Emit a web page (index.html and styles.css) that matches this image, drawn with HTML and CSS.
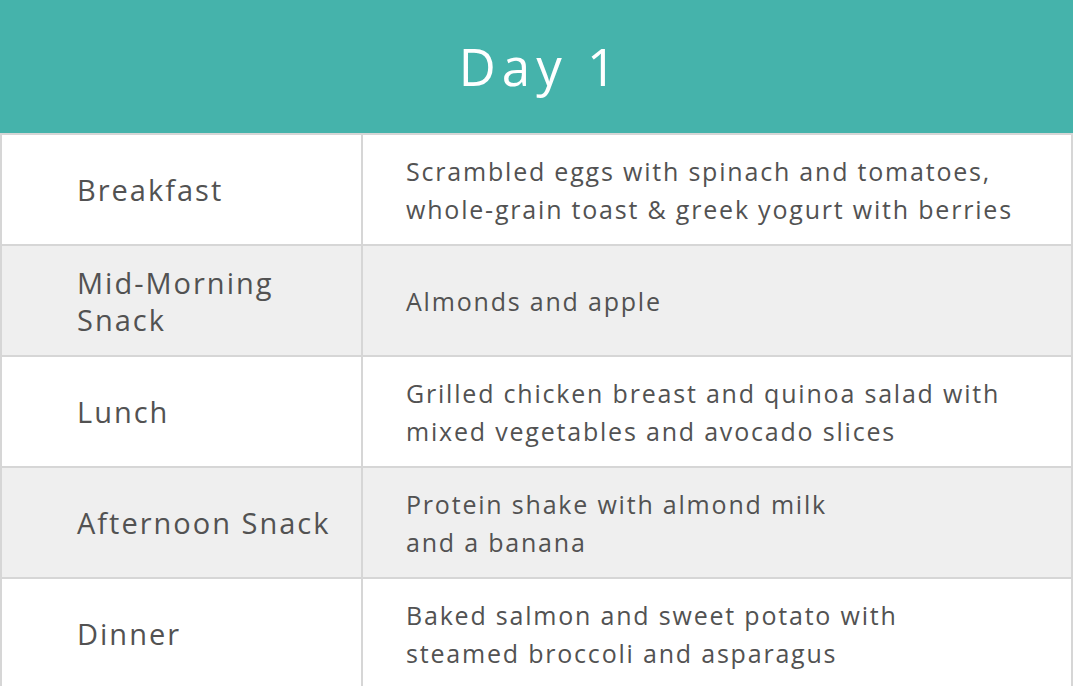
FILE: index.html
```html
<!DOCTYPE html>
<html>
<head>
<meta charset="utf-8">
<link rel="stylesheet" href="styles.css">
</head>
<body>
<div class="plan">
  <div class="header"><h1 class="title">Day 1</h1></div>
  <table class="meals">
    <tr class="row">
      <td class="meal">Breakfast</td>
      <td class="desc">Scrambled eggs with spinach and tomatoes,<br>whole-grain toast &amp; greek yogurt with berries</td>
    </tr>
    <tr class="row alt">
      <td class="meal">Mid-Morning<br>Snack</td>
      <td class="desc">Almonds and apple</td>
    </tr>
    <tr class="row">
      <td class="meal">Lunch</td>
      <td class="desc">Grilled chicken breast and quinoa salad with<br>mixed vegetables and avocado slices</td>
    </tr>
    <tr class="row alt">
      <td class="meal">Afternoon Snack</td>
      <td class="desc">Protein shake with almond milk<br>and a banana</td>
    </tr>
    <tr class="row">
      <td class="meal">Dinner</td>
      <td class="desc">Baked salmon and sweet potato with<br>steamed broccoli and asparagus</td>
    </tr>
  </table>
</div>
</body>
</html>
```

FILE: styles.css
```css
html, body {
  margin: 0;
  padding: 0;
  background: #ffffff;
}
.plan {
  width: 1073px;
  font-family: "Open Sans", "DejaVu Sans", sans-serif;
  color: #525252;
}
.header {
  height: 133px;
  background: #45b3ab;
  display: flex;
  align-items: center;
  justify-content: center;
}
.title {
  margin: 0;
  color: #ffffff;
  font-size: 51px;
  font-weight: 500;
  letter-spacing: 6px;
  padding-left: 8px;
  line-height: 1;
}
.meals {
  width: 1073px;
  border-collapse: collapse;
  table-layout: fixed;
}
.row td {
  border: 2px solid #d6d6d6;
  height: 109px;
  padding: 0;
  vertical-align: middle;
}
.row.alt td {
  background: #efefef;
}
.meal {
  width: 284px;
  padding-left: 75px !important;
  font-size: 29px;
  letter-spacing: 2px;
  line-height: 37px;
}
.desc {
  padding-left: 43px !important;
  font-size: 25px;
  letter-spacing: 1.8px;
  line-height: 38px;
}
```
